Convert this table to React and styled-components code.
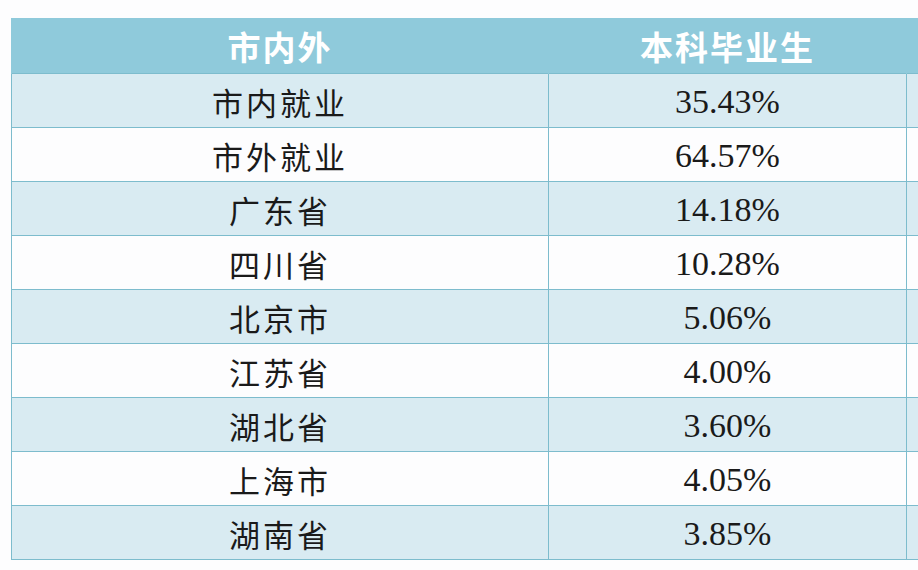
import React from "react";
import styled, { createGlobalStyle } from "styled-components";

const rows = [
  ["市内就业", "35.43%"],
  ["市外就业", "64.57%"],
  ["广东省", "14.18%"],
  ["四川省", "10.28%"],
  ["北京市", "5.06%"],
  ["江苏省", "4.00%"],
  ["湖北省", "3.60%"],
  ["上海市", "4.05%"],
  ["湖南省", "3.85%"],
];

const App = () => {
  return (
    <>
      <GlobalStyle />
      <Page>
        <Table>
          <colgroup>
            <col style={{ width: 537 }} />
            <col style={{ width: 358 }} />
            <col style={{ width: 200 }} />
          </colgroup>
          <thead>
            <tr>
              <HeadCell>市内外</HeadCell>
              <HeadCell>本科毕业生</HeadCell>
              <HeadCell />
            </tr>
          </thead>
          <tbody>
            {rows.map(([name, value], i) => (
              <Row key={name} shaded={i % 2 === 0}>
                <NameCell>{name}</NameCell>
                <ValueCell>{value}</ValueCell>
                <ValueCell />
              </Row>
            ))}
          </tbody>
        </Table>
      </Page>
    </>
  );
};

const GlobalStyle = createGlobalStyle`
  html, body {
    margin: 0;
    padding: 0;
    background: #fdfdfe;
    overflow: hidden;
  }
`;

const Page = styled.div`
  width: 918px;
  height: 570px;
  padding: 18px 0 0 11px;
  box-sizing: border-box;
  overflow: hidden;
`;

const Table = styled.table`
  border-collapse: collapse;
  table-layout: fixed;
  width: 1095px;
`;

const HeadCell = styled.th`
  height: 55px;
  padding: 0;
  background: #8fcadb;
  color: #ffffff;
  font-family: "Noto Sans CJK SC", sans-serif;
  font-weight: 700;
  font-size: 33px;
  letter-spacing: 2px;
  text-align: center;
  vertical-align: middle;
  border-left: 1px solid #8fcadb;
`;

const Row = styled.tr`
  background: ${props => (props.shaded ? "#d9ebf2" : "#fdfdfe")};
`;

const Cell = styled.td`
  height: 51px;
  padding: 2px 0 0;
  text-align: center;
  vertical-align: middle;
  color: #1a1a1a;
  border: 1px solid #7dbccd;
  line-height: 1;
`;

const NameCell = styled(Cell)`
  font-family: "Noto Sans CJK SC", sans-serif;
  font-weight: 400;
  font-size: 31px;
  letter-spacing: 3px;
`;

const ValueCell = styled(Cell)`
  font-family: "Liberation Serif", serif;
  font-size: 34px;
`;

export default App;
